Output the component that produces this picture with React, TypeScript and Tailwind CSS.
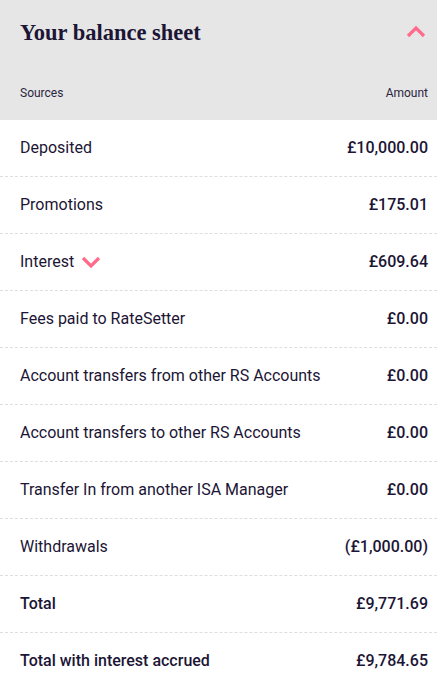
import React from "react";

type Row = { label: string; amount: string; bold?: boolean; expandable?: boolean };

const ROWS: Row[] = [
  { label: "Deposited", amount: "£10,000.00" },
  { label: "Promotions", amount: "£175.01" },
  { label: "Interest", amount: "£609.64", expandable: true },
  { label: "Fees paid to RateSetter", amount: "£0.00" },
  { label: "Account transfers from other RS Accounts", amount: "£0.00" },
  { label: "Account transfers to other RS Accounts", amount: "£0.00" },
  { label: "Transfer In from another ISA Manager", amount: "£0.00" },
  { label: "Withdrawals", amount: "(£1,000.00)" },
  { label: "Total", amount: "£9,771.69", bold: true },
  { label: "Total with interest accrued", amount: "£9,784.65", bold: true },
];

const Chevron = ({ up }: { up?: boolean }) => (
  <svg width="20" height="13" viewBox="0 0 20 13" className="block">
    <path
      d={up ? "M2 11 L10 3 L18 11" : "M2 2 L10 10 L18 2"}
      fill="none"
      stroke="#ff6b8b"
      strokeWidth="3.2"
    />
  </svg>
);

const App = () => {
  return (
    <div className="w-[437px] bg-white text-[#1c1535] font-['Roboto',sans-serif]">
      <div className="bg-[#e6e6e6] h-[120px] pl-5 pr-[9px] flex flex-col">
        <div className="flex items-center justify-between pt-[18px]">
          <h2 className="font-['Liberation_Serif',serif] font-bold text-[22.5px] leading-[30px]">
            Your balance sheet
          </h2>
          <div className="mr-[2px] mt-[-3px]">
            <Chevron up />
          </div>
        </div>
        <div className="flex justify-between mt-[37px] text-[12px] leading-[16px] text-[#2b2540]">
          <span>Sources</span>
          <span>Amount</span>
        </div>
      </div>
      <div>
        {ROWS.map((row, i) => (
          <div
            key={row.label}
            className={
              "flex items-center justify-between pl-5 pr-[9px] text-[16px] " +
              (i === 0 ? "h-[56px] " : "h-[57px] border-t border-dashed border-[#dedede] ")
            }
          >
            <div className="flex items-center gap-[7px]">
              <span className={row.bold ? "font-medium" : ""}>{row.label}</span>
              {row.expandable && (
                <span className="mt-[1px]">
                  <Chevron />
                </span>
              )}
            </div>
            <span className="font-medium">{row.amount}</span>
          </div>
        ))}
      </div>
    </div>
  );
};

export default App;
